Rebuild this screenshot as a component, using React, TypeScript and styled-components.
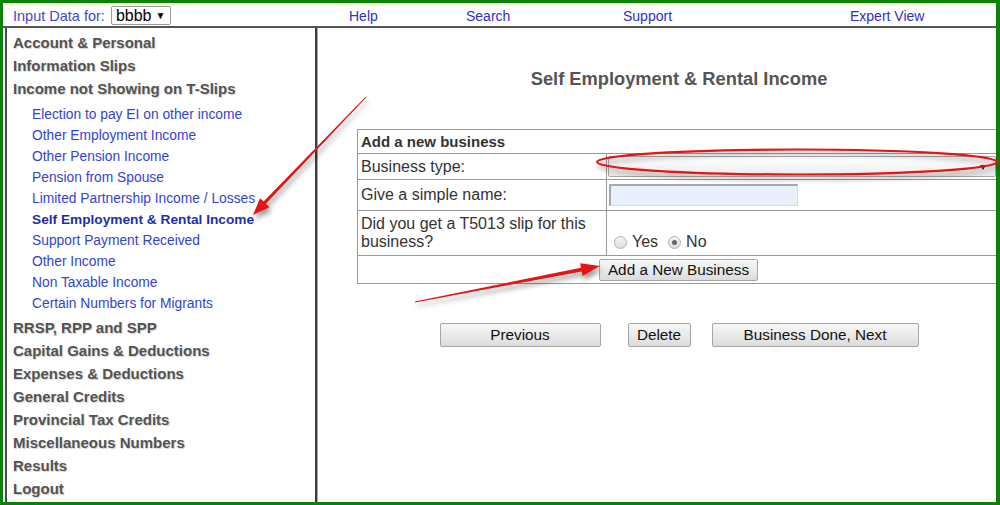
import React from 'react';
import styled, { createGlobalStyle } from 'styled-components';

const GlobalStyle = createGlobalStyle`
  html, body {
    margin: 0;
    padding: 0;
    background: #fff;
  }
  body {
    font-family: "Liberation Sans", Arial, sans-serif;
  }
  * {
    box-sizing: border-box;
  }
`;

const headings1 = ['Account & Personal', 'Information Slips', 'Income not Showing on T-Slips'];

const subItems = [
  'Election to pay EI on other income',
  'Other Employment Income',
  'Other Pension Income',
  'Pension from Spouse',
  'Limited Partnership Income / Losses',
  'Self Employment & Rental Income',
  'Support Payment Received',
  'Other Income',
  'Non Taxable Income',
  'Certain Numbers for Migrants',
];

const headings2 = [
  'RRSP, RPP and SPP',
  'Capital Gains & Deductions',
  'Expenses & Deductions',
  'General Credits',
  'Provincial Tax Credits',
  'Miscellaneous Numbers',
  'Results',
  'Logout',
];

const ACTIVE = 'Self Employment & Rental Income';

type Pt = [number, number];

// tapered arrow: thin tail, filled head at the tip
const arrowPoints = (tail: Pt, tip: Pt, headLen: number, headHalf: number, shaftHalf: number) => {
  const dx = tip[0] - tail[0];
  const dy = tip[1] - tail[1];
  const len = Math.hypot(dx, dy);
  const ux = dx / len;
  const uy = dy / len;
  const nx = -uy;
  const ny = ux;
  const bx = tip[0] - ux * headLen;
  const by = tip[1] - uy * headLen;
  const pts: Pt[] = [
    [tail[0] + nx * 0.5, tail[1] + ny * 0.5],
    [bx + nx * shaftHalf, by + ny * shaftHalf],
    [bx + nx * headHalf, by + ny * headHalf],
    tip,
    [bx - nx * headHalf, by - ny * headHalf],
    [bx - nx * shaftHalf, by - ny * shaftHalf],
    [tail[0] - nx * 0.5, tail[1] - ny * 0.5],
  ];
  return pts.map(p => `${p[0].toFixed(1)},${p[1].toFixed(1)}`).join(' ');
};

const App: React.FC = () => (
  <Page>
    <GlobalStyle />
    <Frame>
      <TopStripe />
      <TopBar>
        <InputData>
          Input Data for:
          <ClientSelect>
            bbbb <Caret>▼</Caret>
          </ClientSelect>
        </InputData>
        <NavLink>Help</NavLink>
        <NavLink>Search</NavLink>
        <NavLink>Support</NavLink>
        <NavLink>Expert View</NavLink>
      </TopBar>
      <Content>
        <Sidebar>
          {headings1.map(h => (
            <Heading key={h}>{h}</Heading>
          ))}
          <SubList>
            {subItems.map(s => (
              <SubItem key={s} active={s === ACTIVE}>
                {s}
              </SubItem>
            ))}
          </SubList>
          {headings2.map(h => (
            <Heading key={h}>{h}</Heading>
          ))}
        </Sidebar>
        <Main>
          <Column>
            <Title>Self Employment &amp; Rental Income</Title>
            <FormTable>
              <tbody>
                <tr>
                  <HeadCell colSpan={2} height={24}>
                    Add a new business
                  </HeadCell>
                </tr>
                <tr>
                  <LabelCell height={26}>Business type:</LabelCell>
                  <FieldCell>
                    <TypeSelect>
                      <SmallCaret />
                    </TypeSelect>
                  </FieldCell>
                </tr>
                <tr>
                  <LabelCell height={31}>Give a simple name:</LabelCell>
                  <FieldCell>
                    <NameInput />
                  </FieldCell>
                </tr>
                <tr>
                  <LabelCell height={45} top>
                    Did you get a T5013 slip for this business?
                  </LabelCell>
                  <FieldCell bottom>
                    <RadioGroup>
                      <Radio />
                      <RadioLabel>Yes</RadioLabel>
                      <Radio checked />
                      <RadioLabel>No</RadioLabel>
                    </RadioGroup>
                  </FieldCell>
                </tr>
                <tr>
                  <ButtonCell colSpan={2} height={28}>
                    <FormButton width={159} height={22}>
                      Add a New Business
                    </FormButton>
                  </ButtonCell>
                </tr>
              </tbody>
            </FormTable>
            <ButtonRow>
              <FormButton width={161}>Previous</FormButton>
              <FormButton width={63} spaced>
                Delete
              </FormButton>
              <FormButton width={207}>Business Done, Next</FormButton>
            </ButtonRow>
          </Column>
        </Main>
      </Content>
    </Frame>
    <Overlay viewBox="0 0 1000 505" width={1000} height={505}>
      <defs>
        <filter id="shade" x="-20%" y="-50%" width="140%" height="200%">
          <feDropShadow dx="2" dy="4" stdDeviation="2.5" floodColor="#000" floodOpacity="0.4" />
        </filter>
      </defs>
      <g filter="url(#shade)">
        <ellipse cx={797} cy={162} rx={200} ry={12.5} fill="none" stroke="#e31414" strokeWidth={2.2} />
        <polygon points={arrowPoints([366, 97], [253, 215], 17, 6.5, 1.6)} fill="#e31414" />
        <polygon points={arrowPoints([415, 302], [600, 266], 19, 6.5, 2)} fill="#e31414" />
      </g>
    </Overlay>
  </Page>
);

const Page = styled.div`
  position: relative;
  width: 1000px;
  height: 505px;
  overflow: hidden;
`;

const Frame = styled.div`
  width: 1000px;
  height: 505px;
  display: flex;
  flex-direction: column;
  border: 3px solid #0b800b;
  border-right-width: 4px;
  background: #fff;
`;

const TopStripe = styled.div`
  height: 2px;
  background: #fbf1c6;
`;

const TopBar = styled.div`
  height: 21px;
  display: grid;
  grid-template-columns: 346px 117px 157px 227px 1fr;
  align-items: center;
  font-size: 14px;
`;

const InputData = styled.div`
  display: flex;
  align-items: center;
  padding-left: 10px;
  color: #4545cf;
  font-size: 14.5px;
`;

const ClientSelect = styled.div`
  display: flex;
  align-items: center;
  height: 19px;
  width: 60px;
  margin-left: 6px;
  padding: 0 4px;
  border: 1px solid #9a9a9a;
  border-radius: 2px;
  color: #000;
  font-size: 16px;
  background: #fff;
`;

const Caret = styled.span`
  font-size: 10px;
  margin-left: 4px;
`;

const NavLink = styled.div`
  color: #2f2fc4;
  font-size: 14px;
`;

const Content = styled.div`
  flex: 1;
  min-height: 0;
  display: flex;
  border-top: 2px solid #555;
`;

const Sidebar = styled.div`
  width: 312px;
  margin-left: 2px;
  flex-shrink: 0;
  padding-top: 3px;
  border-left: 2px solid #4a4a4a;
  border-right: 2px solid #3c3c3c;
  box-shadow: 1px 0 0 #aaa;
`;

const Heading = styled.div`
  height: 23px;
  line-height: 23px;
  padding-left: 6px;
  font-size: 15px;
  font-weight: bold;
  color: #535353;
  text-shadow: 1px 1px 1px rgba(0, 0, 0, 0.18);
`;

const SubList = styled.div`
  padding: 4px 0 2px 25px;
`;

const SubItem = styled.div<{ active?: boolean }>`
  height: 21px;
  line-height: 21px;
  font-size: ${p => (p.active ? '13.7px' : '13.8px')};
  font-weight: ${p => (p.active ? 'bold' : 'normal')};
  color: ${p => (p.active ? '#1f2ea6' : '#3344d0')};
  white-space: nowrap;
`;

const Main = styled.div`
  flex: 1;
  min-width: 0;
  overflow: hidden;
`;

const Column = styled.div`
  width: 724px;
  padding-top: 40px;
  display: flex;
  flex-direction: column;
`;

const Title = styled.div`
  text-align: center;
  font-size: 18.3px;
  line-height: 22px;
  font-weight: bold;
  color: #555;
`;

const FormTable = styled.table`
  width: 643px;
  margin: 39px 0 0 40px;
  border-collapse: collapse;
  border: 1px solid #999;
  font-size: 16px;
  color: #333;
`;

const HeadCell = styled.td`
  padding: 0 3px;
  font-size: 15px;
  font-weight: bold;
  border: 1px solid #999;
  vertical-align: middle;
`;

const LabelCell = styled.td<{ top?: boolean }>`
  width: 249px;
  padding: ${p => (p.top ? '4px 3px 0' : '0 3px')};
  line-height: 18px;
  border: 1px solid #999;
  vertical-align: ${p => (p.top ? 'top' : 'middle')};
`;

const FieldCell = styled.td<{ bottom?: boolean }>`
  padding: ${p => (p.bottom ? '0 1px 4px' : '0 1px')};
  border: 1px solid #999;
  vertical-align: ${p => (p.bottom ? 'bottom' : 'middle')};
`;

const ButtonCell = styled.td`
  text-align: center;
  border: 1px solid #999;
  vertical-align: middle;
  padding: 0;
`;

const TypeSelect = styled.div`
  position: relative;
  width: 388px;
  height: 21px;
  border: 1px solid #aaa;
  border-radius: 2px;
  background: linear-gradient(#fff, #ececec);
`;

const SmallCaret = styled.span`
  position: absolute;
  right: 9px;
  top: 8px;
  border-left: 3px solid transparent;
  border-right: 3px solid transparent;
  border-top: 5px solid #222;
`;

const NameInput = styled.div`
  width: 189px;
  height: 22px;
  margin-left: 1px;
  background: #e8f0fe;
  border: 1px solid #d6dde8;
  border-top: 2px solid #a8a8a8;
  border-left: 2px solid #a8a8a8;
`;

const RadioGroup = styled.div`
  display: flex;
  align-items: center;
  padding-left: 6px;
  line-height: 18px;
`;

const Radio = styled.span<{ checked?: boolean }>`
  position: relative;
  width: 13px;
  height: 13px;
  border-radius: 50%;
  border: 1px solid #b5b5b5;
  background: linear-gradient(#f4f4f4, #dedede);
  margin-right: 5px;
  &::after {
    content: '';
    display: ${p => (p.checked ? 'block' : 'none')};
    position: absolute;
    left: 3px;
    top: 3px;
    width: 5px;
    height: 5px;
    border-radius: 50%;
    background: #666;
  }
`;

const RadioLabel = styled.span`
  margin-right: 10px;
  color: #333;
`;

const FormButton = styled.button<{ width: number; height?: number; spaced?: boolean }>`
  width: ${p => p.width}px;
  height: ${p => p.height ?? 24}px;
  margin: ${p => (p.spaced ? '0 21px 0 27px' : '0')};
  padding: 0;
  font-family: "Liberation Sans", Arial, sans-serif;
  font-size: 15.3px;
  color: #111;
  background: linear-gradient(#f7f7f7, #dcdcdc);
  border: 1px solid #a6a6a6;
  border-radius: 2px;
  vertical-align: middle;
`;

const ButtonRow = styled.div`
  display: flex;
  justify-content: center;
  margin-top: 39px;
`;

const Overlay = styled.svg`
  position: absolute;
  left: 0;
  top: 0;
  pointer-events: none;
`;

export default App;
